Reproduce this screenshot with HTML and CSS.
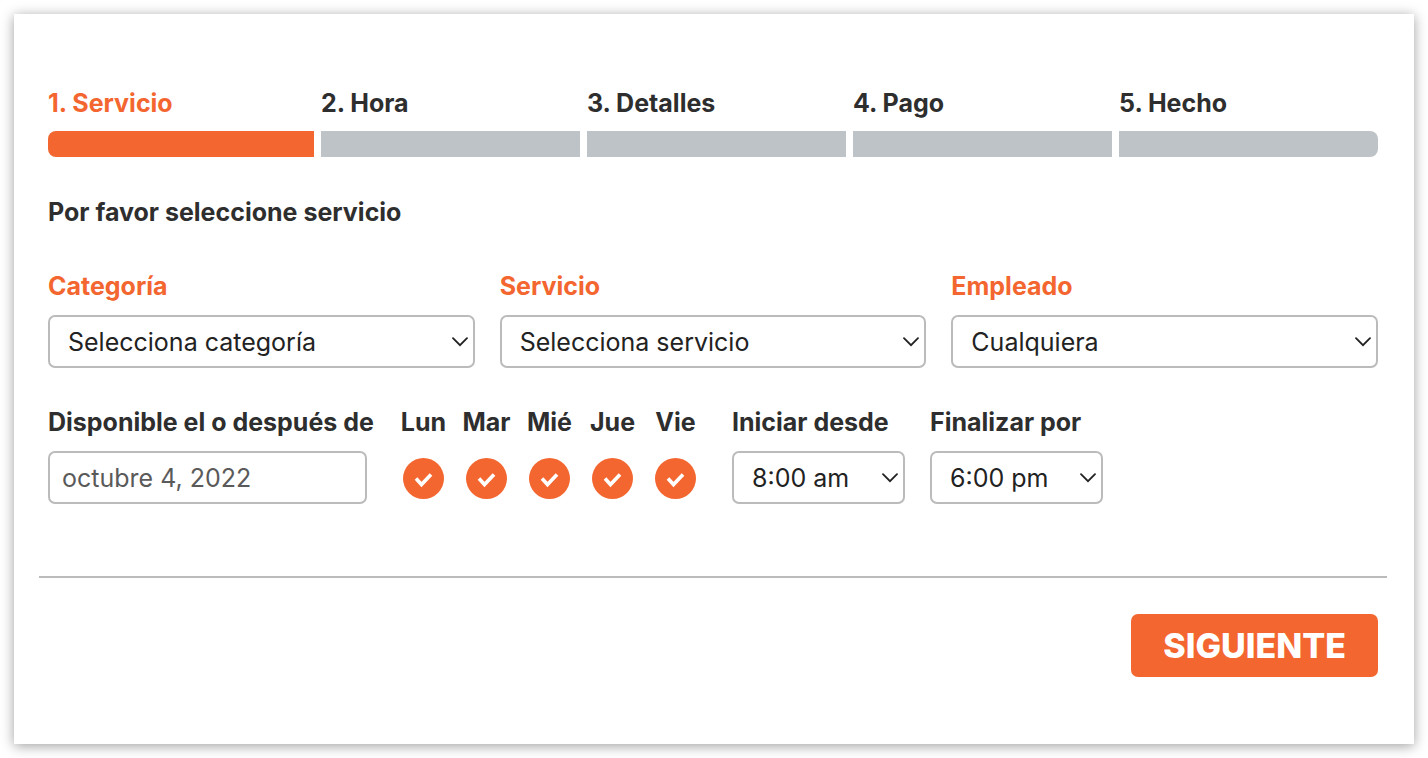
FILE: index.html
```
<!DOCTYPE html>
<html lang="es">
<head>
    <meta charset="utf-8">
    <title>Reserva de cita</title>
    <meta name="viewport" content="width=device-width, initial-scale=1">
    <link rel="stylesheet" href="styles.css">
</head>
<body>
    <form class="booking">
        <!-- Progress -->
        <ol class="steps">
            <li class="step active">1. Servicio<span class="bar"></span></li>
            <li class="step">2. Hora<span class="bar"></span></li>
            <li class="step">3. Detalles<span class="bar"></span></li>
            <li class="step">4. Pago<span class="bar"></span></li>
            <li class="step">5. Hecho<span class="bar"></span></li>
        </ol>

        <h2 class="title">Por favor seleccione servicio</h2>

        <!-- Service -->
        <div class="row">
            <div class="field grow">
                <label class="accent" for="category">Categoría</label>
                <div class="select">
                    <select id="category"><option>Selecciona categoría</option></select>
                    <svg class="arrow" viewBox="0 0 16 10"><path d="M1 1.2l7 7 7-7"/></svg>
                </div>
            </div>
            <div class="field grow">
                <label class="accent" for="service">Servicio</label>
                <div class="select">
                    <select id="service"><option>Selecciona servicio</option></select>
                    <svg class="arrow" viewBox="0 0 16 10"><path d="M1 1.2l7 7 7-7"/></svg>
                </div>
            </div>
            <div class="field grow">
                <label class="accent" for="employee">Empleado</label>
                <div class="select">
                    <select id="employee"><option>Cualquiera</option></select>
                    <svg class="arrow" viewBox="0 0 16 10"><path d="M1 1.2l7 7 7-7"/></svg>
                </div>
            </div>
        </div>

        <!-- Availability -->
        <div class="row">
            <div class="field date">
                <label for="date">Disponible el o después de</label>
                <input id="date" class="text" type="text" value="octubre 4, 2022">
            </div>
            <div class="days">
                <div class="day">
                    <label for="mon">Lun</label>
                    <div class="tick">
                        <input id="mon" type="checkbox" checked>
                        <svg viewBox="0 0 41 41"><path d="M13 20.5l5.5 6 9.5-10"/></svg>
                    </div>
                </div>
                <div class="day">
                    <label for="tue">Mar</label>
                    <div class="tick">
                        <input id="tue" type="checkbox" checked>
                        <svg viewBox="0 0 41 41"><path d="M13 20.5l5.5 6 9.5-10"/></svg>
                    </div>
                </div>
                <div class="day">
                    <label for="wed">Mié</label>
                    <div class="tick">
                        <input id="wed" type="checkbox" checked>
                        <svg viewBox="0 0 41 41"><path d="M13 20.5l5.5 6 9.5-10"/></svg>
                    </div>
                </div>
                <div class="day">
                    <label for="thu">Jue</label>
                    <div class="tick">
                        <input id="thu" type="checkbox" checked>
                        <svg viewBox="0 0 41 41"><path d="M13 20.5l5.5 6 9.5-10"/></svg>
                    </div>
                </div>
                <div class="day">
                    <label for="fri">Vie</label>
                    <div class="tick">
                        <input id="fri" type="checkbox" checked>
                        <svg viewBox="0 0 41 41"><path d="M13 20.5l5.5 6 9.5-10"/></svg>
                    </div>
                </div>
            </div>
            <div class="field time">
                <label for="from">Iniciar desde</label>
                <div class="select">
                    <select id="from"><option>8:00 am</option></select>
                    <svg class="arrow" viewBox="0 0 16 10"><path d="M1 1.2l7 7 7-7"/></svg>
                </div>
            </div>
            <div class="field time">
                <label for="to">Finalizar por</label>
                <div class="select">
                    <select id="to"><option>6:00 pm</option></select>
                    <svg class="arrow" viewBox="0 0 16 10"><path d="M1 1.2l7 7 7-7"/></svg>
                </div>
            </div>
        </div>

        <div class="footer">
            <button type="submit">SIGUIENTE</button>
        </div>
    </form>
</body>
</html>
```

FILE: styles.css
```
* { box-sizing: border-box; }
body { margin: 0; padding: 14px; background: #fff; color: #2e2e2e; font: 700 25px/32px Inter, "Liberation Sans", sans-serif; }
.booking { padding: 73px 36px 67px 34px; background: #fff; box-shadow: 0 2px 12px rgba(0,0,0,0.38); }

.steps { display: flex; margin: 0; padding: 0; list-style: none; }
.step { width: 20%; }
.step + .step { padding-left: 7px; }
.bar { display: block; height: 26px; margin-top: 12px; background: #bdc3c7; }
.step.active { color: #f4662f; }
.step.active .bar { background: #f4662f; }
.step:first-child .bar { border-radius: 8px 0 0 8px; }
.step:last-child .bar { border-radius: 0 8px 8px 0; }

.title { margin: 39px 0 42px; font-size: 25px; font-weight: 700; }

.row { display: flex; gap: 25px; }
.row + .row { margin-top: 38px; }
.grow { flex: 1; }
.date { width: 319px; }
.time { width: 173px; }
label { display: block; margin-bottom: 13px; white-space: nowrap; }
.accent { color: #f4662f; }

.select { position: relative; }
select, .text { display: block; width: 100%; height: 53px; border: 2px solid #bbb; border-radius: 7px; background: #fff; font: 400 25px/32px Inter, "Liberation Sans", sans-serif; }
select { appearance: none; padding: 0 18px; color: #222; }
.text { padding: 0 12px; color: #5a5a5a; }
.arrow { position: absolute; right: 7px; top: 22px; width: 16px; height: 10px; fill: none; stroke: #222; stroke-width: 1.8; stroke-linecap: round; pointer-events: none; }

.days { display: flex; }
.day { width: 63px; text-align: center; }
.tick { position: relative; width: 41px; margin: 20px auto 0; }
.tick input { display: block; appearance: none; width: 41px; height: 41px; margin: 0; border-radius: 50%; background: #f4662f; }
.tick svg { position: absolute; left: 0; top: 0; width: 41px; height: 41px; fill: none; stroke: #fff; stroke-width: 3.6; opacity: 0; pointer-events: none; }
.tick input:checked + svg { opacity: 1; }

.footer { display: flex; justify-content: flex-end; margin: 72px -9px 0; padding: 36px 9px 0; border-top: 2px solid #bbb; }
button { height: 63px; padding: 0 32px; border: none; border-radius: 7px; background: #f4662f; color: #fff; font: 800 34px/40px Inter, "Liberation Sans", sans-serif; cursor: pointer; }
```
